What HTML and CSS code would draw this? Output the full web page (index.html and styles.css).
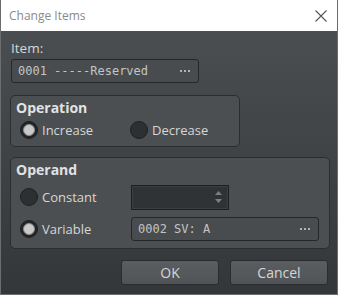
FILE: index.html
```html
<!DOCTYPE html>
<html lang="en">
<head>
    <meta charset="UTF-8">
    <title>Change Items</title>
    <link rel="stylesheet" href="styles.css">
</head>
<body>
    <div class="window">
        <div class="titlebar">
            <span class="title">Change Items</span>
            <svg class="close" width="12" height="12" viewBox="0 0 12 12">
                <path d="M0.5 0.5 L11.5 11.5 M11.5 0.5 L0.5 11.5" stroke="#555" stroke-width="1.1" fill="none"/>
            </svg>
        </div>
        <div class="content">
            <div class="label">Item:</div>
            <div class="picker item-picker">
                <span class="mono">0001 -----Reserved</span>
                <svg class="dots" width="10" height="2" viewBox="0 0 10 2">
                    <rect x="0" y="0" width="2" height="2" fill="#b4b4b4"/>
                    <rect x="4" y="0" width="2" height="2" fill="#b4b4b4"/>
                    <rect x="8" y="0" width="2" height="2" fill="#b4b4b4"/>
                </svg>
            </div>

            <div class="group operation">
                <div class="group-title">Operation</div>
                <div class="row radio-row">
                    <label class="radio wide"><span class="dot checked"></span>Increase</label>
                    <label class="radio"><span class="dot"></span>Decrease</label>
                </div>
            </div>

            <div class="group operand">
                <div class="group-title">Operand</div>
                <div class="row op-row first">
                    <label class="radio wide"><span class="dot"></span>Constant</label>
                    <div class="spin">
                        <svg width="7" height="14" viewBox="0 0 7 14">
                            <path d="M3.5 1 L7 5 L0 5 Z M0 9 L7 9 L3.5 13 Z" fill="#7b7f82"/>
                        </svg>
                    </div>
                </div>
                <div class="row op-row">
                    <label class="radio wide"><span class="dot checked"></span>Variable</label>
                    <div class="picker var-picker">
                        <span class="mono">0002 SV: A</span>
                        <svg class="dots" width="10" height="2" viewBox="0 0 10 2">
                            <rect x="0" y="0" width="2" height="2" fill="#b4b4b4"/>
                            <rect x="4" y="0" width="2" height="2" fill="#b4b4b4"/>
                            <rect x="8" y="0" width="2" height="2" fill="#b4b4b4"/>
                        </svg>
                    </div>
                </div>
            </div>

            <div class="buttons">
                <button>OK</button>
                <button>Cancel</button>
            </div>
        </div>
    </div>
</body>
</html>
```

FILE: styles.css
```css
body {
    margin: 0;
    font-family: "Open Sans", "Noto Sans", sans-serif;
    font-size: 13px;
}
.window {
    width: 338px;
    height: 295px;
    box-sizing: border-box;
    border: 1px solid #6b6e70;
    border-top: none;
    display: flex;
    flex-direction: column;
    overflow: hidden;
}
.titlebar {
    height: 31px;
    flex: none;
    background: #fff;
    display: flex;
    align-items: center;
    justify-content: space-between;
    padding: 0 9px 0 8px;
}
.title {
    color: #8a8a8a;
    font-size: 12px;
}
.close {
    margin-right: 1px;
}
.content {
    flex: 1;
    background: linear-gradient(#4a4e51, #34373a);
    padding: 8px 9px 0 8px;
    color: #d6d6d6;
}
.label {
    padding-left: 2px;
    line-height: 18px;
    margin-bottom: 2px;
    font-size: 13.5px;
}
.picker {
    display: flex;
    align-items: center;
    justify-content: space-between;
    height: 24px;
    box-sizing: border-box;
    border: 1px solid #25282b;
    border-radius: 3px;
    background: #484c4f;
    padding: 0 8px 0 6px;
    color: #c4c4c4;
}
.item-picker {
    width: 188px;
    margin-left: 2px;
}
.mono {
    font-family: "DejaVu Sans Mono", "Liberation Mono", monospace;
    font-size: 12px;
}
.group {
    border: 1px solid #2b2e31;
    border-radius: 5px;
    background: #4b4f52;
    box-sizing: border-box;
    padding: 3px 0 0 5px;
}
.operation {
    width: 230px;
    height: 52px;
    margin: 12px 0 0 1px;
}
.operand {
    width: 320px;
    height: 92px;
    margin: 10px 0 0 1px;
}
.group-title {
    font-weight: bold;
    font-size: 14px;
    color: #e2e2e2;
    line-height: 18px;
}
.row {
    display: flex;
    align-items: center;
    padding-left: 4px;
}
.radio-row {
    margin-top: 4px;
}
.op-row {
    height: 32px;
}
.op-row.first {
    margin-top: 2px;
}
.radio {
    display: flex;
    align-items: center;
    gap: 4px;
}
.radio.wide {
    width: 110px;
}
.dot {
    width: 18px;
    height: 18px;
    box-sizing: border-box;
    border-radius: 50%;
    background: #2d3033;
    border: 1px solid #1e2022;
    display: flex;
    align-items: center;
    justify-content: center;
}
.dot.checked {
    background: #232527;
}
.dot.checked::after {
    content: "";
    width: 10px;
    height: 10px;
    border-radius: 50%;
    background: #c9c9c9;
    border: 1px solid #8c8c8c;
}
.spin {
    width: 98px;
    height: 25px;
    box-sizing: border-box;
    border: 1px solid #1c1e20;
    box-shadow: inset 0 0 0 1px #3b3f42;
    background: #2f3336;
    display: flex;
    justify-content: flex-end;
    align-items: center;
    padding-right: 6px;
    margin-left: 1px;
}
.var-picker {
    width: 188px;
    margin-left: 1px;
}
.buttons {
    display: flex;
    justify-content: flex-end;
    gap: 11px;
    margin-top: 11px;
}
button {
    width: 98px;
    height: 25px;
    background: linear-gradient(#5a5e61, #505457);
    border: 1px solid #2a2d30;
    border-radius: 3px;
    color: #d6d6d6;
    font-family: "Open Sans", "Noto Sans", sans-serif;
    font-size: 14px;
    padding: 0;
}
```
